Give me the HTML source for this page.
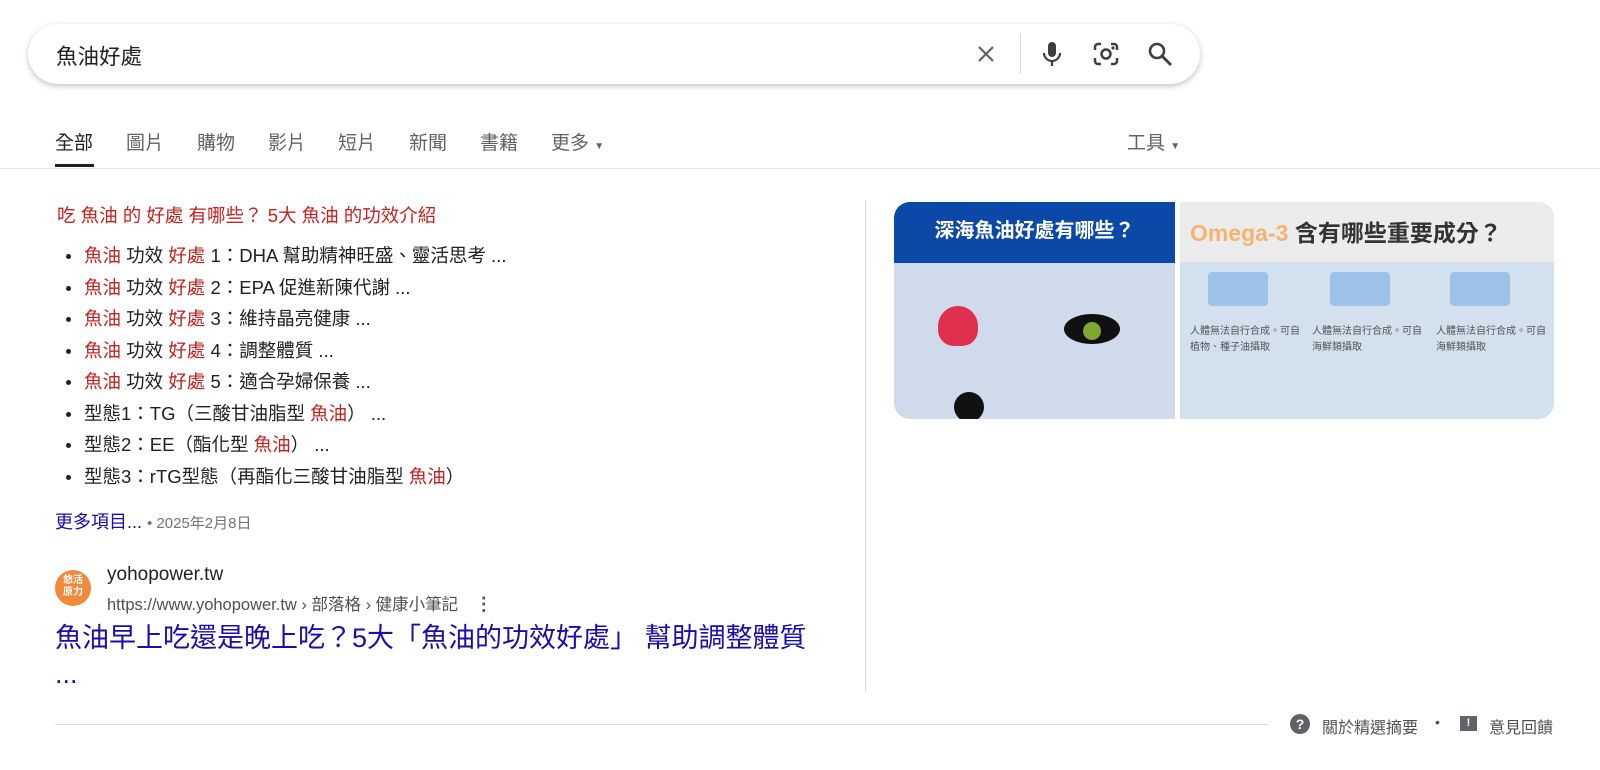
<!DOCTYPE html>
<html><head><meta charset="utf-8"><style>
*{margin:0;padding:0;box-sizing:border-box}
body{width:1600px;height:770px;overflow:hidden;background:#fff;font-family:"Liberation Sans","Noto Sans CJK TC",sans-serif;color:#202124;position:relative}
.abs{position:absolute}
.search{left:28px;top:24px;width:1172px;height:60px;border-radius:30px;box-shadow:0 2px 6px rgba(32,33,36,.28);background:#fff}
.tabs span{position:absolute;top:128px;font-size:19px;color:#5f6368}
.red{color:#c5221f}
ul{position:absolute;left:62px;top:243px;list-style:none}
li{font-size:18.5px;height:31.5px;line-height:26px;position:relative;padding-left:22px;white-space:nowrap}
li:before{content:"";position:absolute;left:4px;top:11px;width:5px;height:5px;border-radius:50%;background:#202124}
</style></head><body>
<div class="abs search"></div>
<div class="abs" style="left:56px;top:40px;font-size:21.5px">魚油好處</div>
<svg class="abs" style="left:974px;top:42px" width="24" height="24" viewBox="0 0 24 24"><path d="M5 5L19 19M19 5L5 19" stroke="#5f6368" stroke-width="2.2"/></svg>
<div class="abs" style="left:1020px;top:34px;width:1px;height:40px;background:#dadce0"></div>
<svg class="abs" style="left:1040px;top:40px" width="24" height="28" viewBox="0 0 24 28"><rect x="8" y="2" width="8" height="15" rx="4" fill="#3c4043"/><path d="M4 13a8 8 0 0 0 16 0M12 21v5" stroke="#3c4043" stroke-width="2.2" fill="none"/></svg>
<svg class="abs" style="left:1092px;top:40px" width="28" height="28" viewBox="0 0 28 28"><path d="M3 10V7a3 3 0 0 1 3-3h3M19 4h3a3 3 0 0 1 3 3v3M25 18v3a3 3 0 0 1-3 3h-3M3 18v3a3 3 0 0 0 3 3h3" stroke="#3c4043" stroke-width="2.5" fill="none"/><circle cx="14" cy="14" r="4.5" stroke="#3c4043" stroke-width="2.5" fill="none"/><circle cx="21" cy="8" r="1.6" fill="#3c4043"/></svg>
<svg class="abs" style="left:1147px;top:41px" width="26" height="26" viewBox="0 0 26 26"><circle cx="10" cy="10" r="7" stroke="#3c4043" stroke-width="2.6" fill="none"/><path d="M15 15L24 24" stroke="#3c4043" stroke-width="2.8"/></svg>
<div class="tabs">
<span style="left:55px;color:#202124">全部</span><span style="left:126px">圖片</span><span style="left:197px">購物</span><span style="left:268px">影片</span><span style="left:338px">短片</span><span style="left:409px">新聞</span><span style="left:480px">書籍</span><span style="left:551px">更多 <small style="font-size:10px">▼</small></span><span style="left:1127px">工具 <small style="font-size:10px">▼</small></span>
</div>
<div class="abs" style="left:55px;top:164px;width:39px;height:3px;background:#202124"></div>
<div class="abs" style="left:0;top:168px;width:1600px;height:1px;background:#e8eaed"></div>
<div class="abs" style="left:57px;top:202px;font-size:18.5px;white-space:nowrap"><span class="red">吃 魚油 的 好處 有哪些？ 5大 魚油 的功效介紹</span></div>
<ul>
<li><span class="red">魚油</span> 功效 <span class="red">好處</span> 1：DHA 幫助精神旺盛、靈活思考 ...</li>
<li><span class="red">魚油</span> 功效 <span class="red">好處</span> 2：EPA 促進新陳代謝 ...</li>
<li><span class="red">魚油</span> 功效 <span class="red">好處</span> 3：維持晶亮健康 ...</li>
<li><span class="red">魚油</span> 功效 <span class="red">好處</span> 4：調整體質 ...</li>
<li><span class="red">魚油</span> 功效 <span class="red">好處</span> 5：適合孕婦保養 ...</li>
<li>型態1：TG（三酸甘油脂型 <span class="red">魚油</span>） ...</li>
<li>型態2：EE（酯化型 <span class="red">魚油</span>） ...</li>
<li>型態3：rTG型態（再酯化三酸甘油脂型 <span class="red">魚油</span>）</li>
</ul>
<div class="abs" style="left:55px;top:508px;font-size:18px;color:#1a0dab;white-space:nowrap">更多項目... <span style="color:#70757a;font-size:15px">• 2025年2月8日</span></div>
<div class="abs" style="left:55px;top:570px;width:36px;height:36px;border-radius:50%;background:#f08a3c;color:#fff;font-size:10px;line-height:12px;text-align:center;padding-top:5px;font-weight:bold">悠活<br>原力</div>
<div class="abs" style="left:107px;top:564px;font-size:19px;white-space:nowrap">yohopower.tw</div>
<div class="abs" style="left:107px;top:591px;font-size:16.5px;color:#4d5156;white-space:nowrap">https://www.yohopower.tw › 部落格 › 健康小筆記 <b style="margin-left:12px;font-size:18px">⋮</b></div>
<div class="abs" style="left:55px;top:620px;font-size:27px;line-height:36px;color:#1a0dab;width:790px">魚油早上吃還是晚上吃？5大「魚油的功效好處」 幫助調整體質<br>...</div>
<div class="abs" style="left:865px;top:200px;width:1px;height:492px;background:#dadce0"></div>
<div class="abs" style="left:894px;top:202px;width:281px;height:217px;border-radius:16px 0 0 16px;overflow:hidden;background:#cfdbea">
<div style="height:61px;background:#0b48a8;color:#fff;font-size:20px;font-weight:bold;text-align:center;line-height:58px">深海魚油好處有哪些？</div>
<div style="position:absolute;left:44px;top:104px;width:40px;height:40px;border-radius:50% 50% 40% 40%;background:#e03050"></div>
<div style="position:absolute;left:170px;top:112px;width:56px;height:30px;border-radius:50%;background:#111;border:4px solid #111"><div style="margin:4px auto;width:18px;height:18px;border-radius:50%;background:#7ca832"></div></div>
<div style="position:absolute;left:60px;top:190px;width:30px;height:30px;border-radius:50%;background:#111"></div>
</div>
<div class="abs" style="left:1180px;top:202px;width:374px;height:217px;border-radius:0 16px 16px 0;overflow:hidden;background:#d3e0ee">
<div style="height:60px;background:#ececec;font-size:23px;font-weight:bold;line-height:62px;padding-left:10px;color:#333"><span style="color:#f4b470">Omega-3</span> 含有哪些重要成分？</div>
<div style="position:absolute;left:28px;top:70px;width:60px;height:34px;background:#9fc2e8;border-radius:4px"></div>
<div style="position:absolute;left:150px;top:70px;width:60px;height:34px;background:#9fc2e8;border-radius:4px"></div>
<div style="position:absolute;left:270px;top:70px;width:60px;height:34px;background:#9fc2e8;border-radius:4px"></div>
<div style="position:absolute;left:10px;top:122px;width:110px;height:80px;color:#555;font-size:10px;line-height:16px">人體無法自行合成。可自植物、種子油攝取</div>
<div style="position:absolute;left:132px;top:122px;width:110px;font-size:10px;color:#555;line-height:16px">人體無法自行合成。可自海鮮類攝取</div>
<div style="position:absolute;left:256px;top:122px;width:110px;font-size:10px;color:#555;line-height:16px">人體無法自行合成。可自海鮮類攝取</div>
</div>
<div class="abs" style="left:55px;top:724px;width:1214px;height:1px;background:#dadce0"></div>
<div class="abs" style="left:1290px;top:714px;width:20px;height:20px;border-radius:50%;background:#5f6368;color:#fff;text-align:center;font-size:14px;line-height:20px;font-weight:bold">?</div>
<div class="abs" style="left:1322px;top:714px;font-size:16px;color:#4d5156;white-space:nowrap">關於精選摘要</div>
<div class="abs" style="left:1435px;top:714px;font-size:14px;color:#4d5156">•</div>
<div class="abs" style="left:1460px;top:716px;width:17px;height:15px;background:#5f6368;color:#fff;text-align:center;font-size:11px;line-height:15px;font-weight:bold">!</div>
<div class="abs" style="left:1489px;top:714px;font-size:16px;color:#4d5156;white-space:nowrap">意見回饋</div>
</body></html>
